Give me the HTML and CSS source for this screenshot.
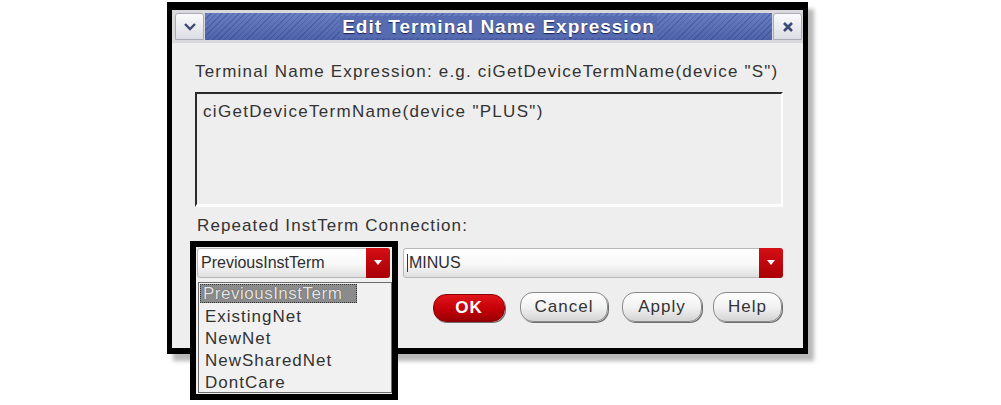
FILE: index.html
```html
<!DOCTYPE html>
<html>
<head>
<meta charset="utf-8">
<link rel="stylesheet" href="styles.css">
</head>
<body>
<div class="stage">
  <div class="dialog">
    <div class="titlebar">
      <div class="tbtn min"><svg width="14" height="10" viewBox="0 0 14 10"><path d="M2 2 L7 7 L12 2" fill="none" stroke="#3c4a78" stroke-width="2.4"/></svg></div>
      <div class="title"><span>Edit Terminal Name Expression</span></div>
      <div class="tbtn close"><svg width="12" height="12" viewBox="0 0 12 12"><path d="M2 2 L10 10 M10 2 L2 10" stroke="#3c4a78" stroke-width="2.6"/></svg></div>
    </div>
    <div class="content">
      <div class="label">Terminal Name Expression: e.g. ciGetDeviceTermName(device "S")</div>
      <div class="textarea">ciGetDeviceTermName(device "PLUS")</div>
      <div class="label label2">Repeated InstTerm Connection:</div>
      <div class="combo-row">
        <div class="anno">
          <div class="anno-frame"></div>
          <div class="combo small">
            <div class="combo-text">PreviousInstTerm</div>
            <div class="arrow"><svg width="10" height="6" viewBox="0 0 10 6"><path d="M1 0 L9 0 L5 5 Z" fill="#fff"/></svg></div>
          </div>
          <div class="popup">
            <div class="item sel">PreviousInstTerm</div>
            <div class="item">ExistingNet</div>
            <div class="item">NewNet</div>
            <div class="item">NewSharedNet</div>
            <div class="item">DontCare</div>
          </div>
        </div>
        <div class="combo big">
          <div class="combo-text"><span class="caret"></span>MINUS</div>
          <div class="arrow"><svg width="10" height="6" viewBox="0 0 10 6"><path d="M1 0 L9 0 L5 5 Z" fill="#fff"/></svg></div>
        </div>
      </div>
      <div class="buttons">
        <div class="btn ok">OK</div>
        <div class="btn cancel">Cancel</div>
        <div class="btn apply">Apply</div>
        <div class="btn help">Help</div>
      </div>
    </div>
  </div>
</div>
</body>
</html>
```
FILE: styles.css
```css
html, body {
  margin: 0;
  background: #ffffff;
}
html {
  min-height: 405px;
}
body {
  min-height: 405px;
  font-family: "Liberation Sans", Arial, sans-serif;
  color: #2a2a2a;
}
.stage {
  padding: 2px 0 0 167px;
  min-height: 403px;
}
.dialog {
  box-sizing: border-box;
  width: 641px;
  height: 352px;
  border: 5px solid #000;
  border-top-width: 8px;
  border-bottom-width: 6px;
  background: #eeeeee;
  box-shadow: 6px 7px 4px rgba(0, 0, 0, 0.28);
}
.titlebar {
  display: flex;
  align-items: stretch;
  height: 33px;
  padding: 3px 1px 3px 3px;
  box-sizing: border-box;
  background: #d9d9dc;
  gap: 1px;
}
.tbtn {
  width: 29px;
  box-sizing: border-box;
  border: 1px solid #a9acb8;
  border-radius: 3px 3px 0 0;
  background: linear-gradient(#fbfbfd, #dcdde3);
  display: flex;
  align-items: center;
  justify-content: center;
}
.title {
  flex: 1;
  background:
    repeating-linear-gradient(135deg, rgba(40, 60, 140, 0.35) 0 1px, transparent 1px 4px),
    linear-gradient(#6a7fc2, #4f63aa);
  display: flex;
  align-items: center;
  justify-content: center;
  padding-left: 20px;
}
.title span {
  font-weight: bold;
  font-size: 19px;
  color: #ffffff;
  letter-spacing: 1px;
  text-shadow: 0 1px 1px #1c2455;
  background: #566bb0;
  padding: 0 2px;
}
.content {
  padding: 17px 20px 0 23px;
}
.label {
  font-size: 17px;
  letter-spacing: 1.2px;
  color: #333;
  height: 24px;
  line-height: 24px;
  white-space: nowrap;
}
.textarea {
  box-sizing: border-box;
  margin-top: 8px;
  height: 115px;
  width: 588px;
  border-top: 2px solid #2a2a2a;
  border-left: 2px solid #2a2a2a;
  border-right: 2px solid #ffffff;
  border-bottom: 3px solid #ffffff;
  padding: 8px 6px;
  font-size: 17px;
  letter-spacing: 1.3px;
  color: #333;
  line-height: 20px;
}
.label2 {
  margin-top: 7px;
  padding-left: 2px;
  letter-spacing: 1.1px;
}
.combo-row {
  display: flex;
  gap: 13px;
  margin-top: 10px;
  padding-left: 2px;
}
.anno {
  position: relative;
  width: 193px;
  height: 30px;
}
.anno-frame {
  position: absolute;
  left: -7px;
  top: -7px;
  width: 196px;
  height: 147px;
  border: 6px solid #000;
  background: #efefef;
}
.combo {
  position: relative;
  box-sizing: border-box;
  height: 30px;
  display: flex;
  border: 1px solid #b8b8b8;
  border-radius: 3px;
  background: linear-gradient(#ffffff 0%, #f8f8f8 55%, #dedede 100%);
}
.combo.small { width: 193px; }
.combo.big { width: 380px; }
.combo-text {
  flex: 1;
  font-size: 16px;
  letter-spacing: 0;
  line-height: 28px;
  padding-left: 3px;
  color: #2e2e2e;
  display: flex;
  align-items: center;
}
.caret {
  display: inline-block;
  width: 1px;
  height: 18px;
  background: #333;
  margin-right: 1px;
}
.arrow {
  width: 24px;
  background: linear-gradient(#d40f14, #a80006);
  border-radius: 0 3px 3px 0;
  display: flex;
  align-items: center;
  justify-content: center;
  margin: -1px -1px -1px 0;
}
.popup {
  position: absolute;
  left: 1px;
  top: 34px;
  width: 194px;
  height: 111px;
  box-sizing: border-box;
  border: 1px solid #6c6c6c;
  background: #f1f1f1;
  padding: 1px 1px;
  z-index: 2;
}
.item {
  height: 22px;
  line-height: 22px;
  font-size: 17px;
  padding-left: 5px;
  letter-spacing: 1px;
  color: #333;
  white-space: nowrap;
}
.item.sel {
  height: 19px;
  line-height: 19px;
  margin-bottom: 3px;
  background: #8b8b8b;
  color: #e6e6e6;
  text-shadow: 0 0 1px #333;
  outline: 1px dotted #333;
  outline-offset: -1px;
  width: 154px;
  padding-left: 3px;
  letter-spacing: 0.5px;
}
.buttons {
  display: flex;
  justify-content: flex-end;
  gap: 14px;
  margin-top: 14px;
  padding-right: 1px;
}
.btn {
  box-sizing: border-box;
  height: 30px;
  border-radius: 13px;
  border: 1px solid #8a8a8a;
  background: linear-gradient(#fefefe 0%, #f2f2f2 50%, #d4d4d4 100%);
  font-size: 17px;
  letter-spacing: 1px;
  color: #333;
  display: flex;
  align-items: center;
  justify-content: center;
  box-shadow: 1px 1px 0 #6f6f6f;
}
.btn.ok {
  width: 72px;
  height: 28px;
  margin-top: 2px;
  background: linear-gradient(#e0141b 0%, #c40008 55%, #980005 100%);
  border-color: #8a0004;
  color: #ffffff;
  font-weight: bold;
  font-size: 17px;
  margin-right: 1px;
}
.btn.cancel { width: 88px; }
.btn.apply { width: 80px; margin-left: 0; }
.btn.help { width: 69px; margin-left: -3px; }
```
